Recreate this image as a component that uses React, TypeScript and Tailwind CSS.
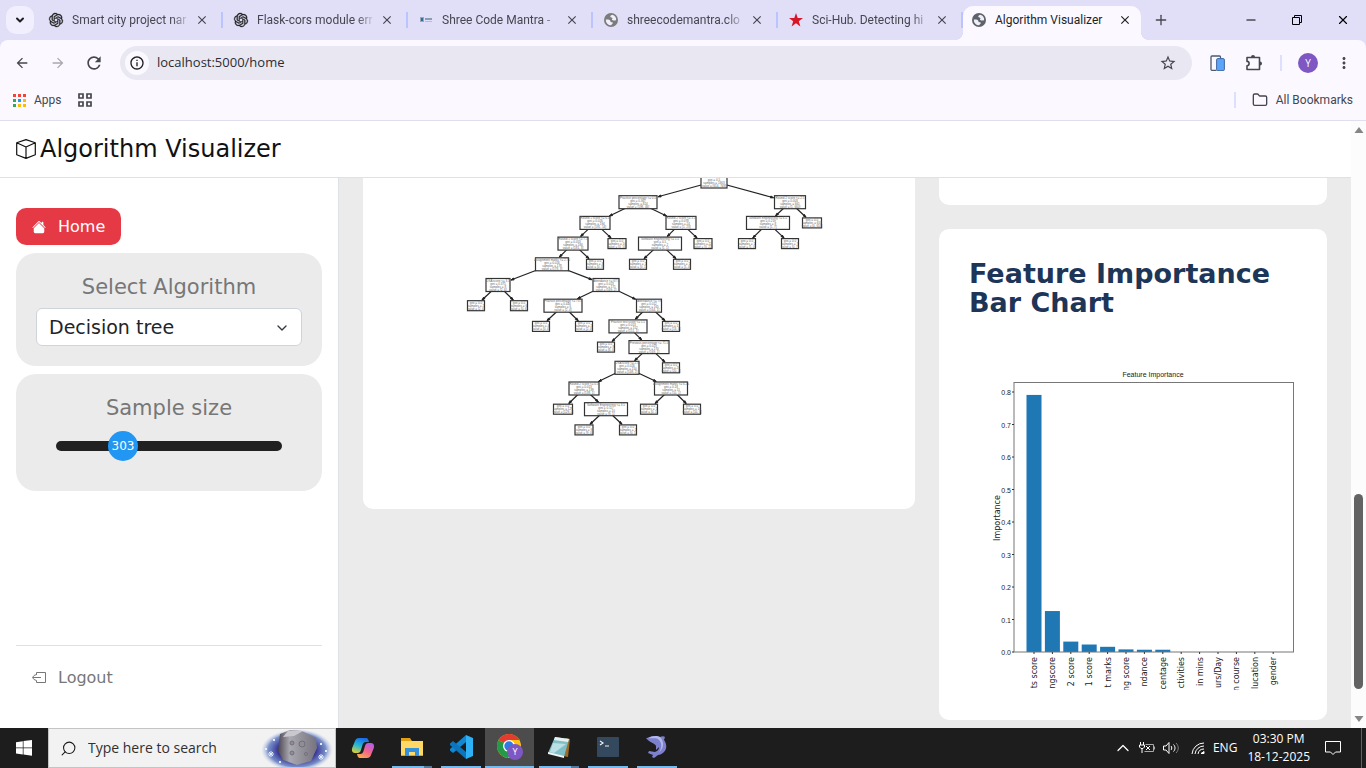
import { useState } from "react";
import type { ReactNode } from "react";
import clsx from "clsx";
import {
  MdArrowBack,
  MdArrowForward,
  MdClose,
  MdInfoOutline,
  MdMoreVert,
  MdRefresh,
  MdStarBorder,
} from "react-icons/md";
import { SiOpenai } from "react-icons/si";
import { BsHouseFill } from "react-icons/bs";
import { ChevronDown, ChevronUp, Folder, Minus, Plus, Search, X } from "lucide-react";

/* ---------- browser chrome ---------- */

const GlobeIcon = ({ className }: { className?: string }) => (
  <svg viewBox="0 0 14 14" className={clsx("size-3.5", className)}>
    <circle cx="7" cy="7" r="7" fill="currentColor" />
    <path
      d="M8.200 1.700C6.500 2.200 6 3.200 6.400 4c.4.700 1.600.3 2 1 .3.700-.8 1.300-.2 2 .7.800 2.300.3 3.900.2A5.200 5.200 0 0 0 8.200 1.700z"
      fill="#efeefb"
    />
    <path
      d="M1.800 6.600c1.600-.4 3.600-.2 4.200.7.500.8.100 1.300 1 1.700.9.400 1.700.2 1.800 1 .1 1-1.200 1.100-1.500 2.200A5.200 5.200 0 0 1 1.800 6.600z"
      fill="#efeefb"
    />
  </svg>
);

const CodeMantraIcon = () => (
  <svg viewBox="0 0 14 14" className="size-3.5">
    <path d="M1 4h4v5H1z" fill="#9aa7b4" />
    <path d="M2 5h2v3H2z" fill="#33699b" />
    <path d="M6 5h7v2H6z" fill="#8b9db0" />
    <path d="M6 8h7v1H6z" fill="#efb27c" />
  </svg>
);

const RedStar = () => (
  <svg viewBox="0 0 14 14" className="size-3.5">
    <path
      d="M7 0l1.700 5H14L9.800 8.200l1.600 5.300L7 10.300l-4.400 3.200 1.600-5.300L0 5h5.300z"
      fill="#d81427"
    />
  </svg>
);

const OpenAiIcon = () => (
  <SiOpenai className="size-3.5 overflow-visible stroke-[#1f1f1f] text-[#1f1f1f]" strokeWidth={0.6} />
);

const tabs: { title: string; icon: ReactNode }[] = [
  { title: "Smart city project nar", icon: <OpenAiIcon /> },
  { title: "Flask-cors module err", icon: <OpenAiIcon /> },
  { title: "Shree Code Mantra -", icon: <CodeMantraIcon /> },
  { title: "shreecodemantra.clo", icon: <GlobeIcon className="text-[#7b7b7b]" /> },
  { title: "Sci-Hub. Detecting hi", icon: <RedStar /> },
];

const TabStrip = () => (
  <div className="flex h-10 shrink-0 bg-[#e0dff7] pl-1.5 font-[Roboto,sans-serif]">
    <button
      aria-label="Search tabs"
      className="mt-1.5 flex size-7 shrink-0 items-center justify-center rounded-[10px] bg-[#f1effe] text-[#1f1f1f]"
    >
      <ChevronDown className="size-3" strokeWidth={4} />
    </button>
    <div className="ml-1 flex min-w-0">
      {tabs.map((tab) => (
        <div
          key={tab.title}
          className="flex w-[185px] min-w-0 items-center pl-[11px] text-xs text-[#45464f]"
        >
          <span className="flex w-3.5 shrink-0 justify-center">{tab.icon}</span>
          <span className="ml-[9px] min-w-0 flex-1 overflow-hidden whitespace-nowrap [mask-image:linear-gradient(to_right,black_100px,transparent_118px)]">
            {tab.title}
          </span>
          <button aria-label="Close tab" className="mr-3 ml-1.5">
            <MdClose className="size-3.5" />
          </button>
          <span className="h-4 w-0.5 bg-[#bcc4ff]" />
        </div>
      ))}
    </div>
    <div className="flex shrink-0 items-end">
      <span className="-ml-2 h-2 w-2 bg-[radial-gradient(circle_at_0_0,transparent_8px,#fbf9ff_8px)]" />
      <div className="flex h-[34px] w-[178px] items-center rounded-t-[10px] bg-[#fbf9ff] pb-1.5 pl-[9px] text-xs text-[#1f1f1f]">
        <GlobeIcon className="text-[#5f6368]" />
        <span className="ml-[9px] flex-1 whitespace-nowrap">Algorithm Visualizer</span>
        <button aria-label="Close tab" className="mr-[9px]">
          <MdClose className="size-3.5" />
        </button>
      </div>
      <span className="h-2 w-2 bg-[radial-gradient(circle_at_100%_0,transparent_8px,#fbf9ff_8px)]" />
    </div>
    <button aria-label="New tab" className="ml-1 text-[#45464f]">
      <Plus className="size-4" />
    </button>
    <div className="ml-auto flex shrink-0 text-black">
      <button aria-label="Minimize" className="flex w-[46px] items-center justify-center">
        <Minus className="size-3.5" strokeWidth={2} />
      </button>
      <button aria-label="Restore" className="flex w-[46px] items-center justify-center">
        <svg viewBox="0 0 10 10" className="size-2.5" fill="none" stroke="currentColor">
          <path d="M.5 2.500h7v7h-7zM2.500 2.500v-2h7v7h-2" />
        </svg>
      </button>
      <button aria-label="Close" className="flex w-[46px] items-center justify-center">
        <X className="size-3.5" strokeWidth={2} />
      </button>
    </div>
  </div>
);

const Toolbar = () => (
  <div className="bg-[#e0dff7]">
    <div className="flex h-[46px] items-center rounded-t-lg bg-[#fbf9ff] pl-3.5 text-[#45464f]">
      <button aria-label="Back">
        <MdArrowBack className="size-4" />
      </button>
      <button aria-label="Forward" className="ml-5 text-[#a9a8b0]">
        <MdArrowForward className="size-4" />
      </button>
      <button aria-label="Reload" className="ml-[18px]">
        <MdRefresh className="size-5" />
      </button>
      <div className="ml-4 flex h-[34px] min-w-0 flex-1 items-center rounded-full bg-[#e9e8f2] px-[5px]">
        <span className="flex size-6 items-center justify-center rounded-full bg-[#fbf9ff] text-[#1f1f1f]">
          <MdInfoOutline className="size-4" />
        </span>
        <input
          aria-label="Address"
          defaultValue="localhost:5000/home"
          className="ml-2 min-w-0 flex-1 bg-transparent text-[13px] text-[#2b2c34] outline-none"
        />
        <button aria-label="Bookmark this tab" className="mr-2.5">
          <MdStarBorder className="size-[18px]" />
        </button>
      </div>
      <button aria-label="Devices" className="ml-[18px]">
        <svg viewBox="0 0 16 16" className="size-4" fill="none">
          <path d="M2.500 15.300H2A1 1 0 0 1 1 14V2a1 1 0 0 1 1-1h7.500a1 1 0 0 1 1 1v1.500M2.500 15.300h4" stroke="#4b5a70" strokeWidth="1.300" />
          <rect x="6.600" y="3.600" width="7.800" height="12" rx="1.200" fill="#5ba4f8" stroke="#3d69a7" />
        </svg>
      </button>
      <button aria-label="Extensions" className="ml-5">
        <svg viewBox="0 0 16 16" className="size-4" fill="none" stroke="currentColor" strokeWidth="1.600">
          <path d="M1 2.500h12.500v12H1v-3.800c2.800 0 2.800-4.300 0-4.300z" strokeLinejoin="round" />
          <path d="M5 2a2 2 0 0 1 4 0zM14 6.500a2 2 0 0 1 0 4z" fill="currentColor" stroke="none" />
        </svg>
      </button>
      <span className="ml-[18px] h-4 w-0.5 bg-[#dde0fd]" />
      <button className="ml-4 flex size-5 items-center justify-center rounded-full bg-[#7e57c2] text-[10px] text-white">
        Y
      </button>
      <button aria-label="Menu" className="mr-[13px] ml-[17px]">
        <MdMoreVert className="size-[18px]" />
      </button>
    </div>
  </div>
);

const appDots = [
  "bg-[#f44336]", "bg-[#f44336]", "bg-[#f44336]",
  "bg-[#34a853]", "bg-[#2196f3]", "bg-[#fbbc04]",
  "bg-[#34a853]", "bg-[#fbbc04]", "bg-[#fbbc04]",
];

const BookmarksBar = () => (
  <div className="flex h-[34px] items-center bg-[#fbf9ff] px-[13px] pb-1.5 font-[Roboto,sans-serif] text-xs text-[#45464f]">
    <a href="#apps" className="flex items-center">
      <span className="grid grid-cols-3 gap-0.5">
        {appDots.map((color, i) => (
          <span key={i} className={clsx("size-[3px]", color)} />
        ))}
      </span>
      <span className="ml-2">Apps</span>
    </a>
    <button aria-label="Tab groups" className="ml-4">
      <svg viewBox="0 0 14 14" className="size-3.5" fill="none" stroke="currentColor" strokeWidth="1.700">
        <path d="M1 1h4v4H1zM9 1h4v4H9zM1 9h4v4H1zM9 9h4v4H9z" />
      </svg>
    </button>
    <span className="ml-auto h-4 w-0.5 bg-[#dde0fd]" />
    <a href="#bookmarks" className="ml-4 flex items-center">
      <Folder className="size-4" />
      <span className="ml-2">All Bookmarks</span>
    </a>
  </div>
);

/* ---------- sidebar ---------- */

const MIN_SAMPLES = 0;
const MAX_SAMPLES = 1143;

const Sidebar = () => {
  const [samples, setSamples] = useState(303);
  const ratio = (samples - MIN_SAMPLES) / (MAX_SAMPLES - MIN_SAMPLES);

  return (
    <aside className="flex w-[339px] shrink-0 flex-col border-r border-[#dee2e6] bg-white px-4 pt-[30px]">
      <a
        href="#home"
        className="flex h-[37px] items-center gap-3 self-start rounded-[10px] bg-[#e63946] px-4 text-white"
      >
        <BsHouseFill className="size-3.5" />
        Home
      </a>

      <div className="mt-2 rounded-[20px] bg-[#ebebeb] px-5 pt-5 pb-5">
        <label htmlFor="algorithm" className="block text-center text-[21px] leading-[29px] text-[#777777]">
          Select Algorithm
        </label>
        <div className="relative mt-1.5">
          <select
            id="algorithm"
            className="h-[38px] w-full appearance-none rounded-md border border-[#ced4da] bg-white px-3 text-[19px] text-[#212529]"
          >
            <option>Decision tree</option>
          </select>
          <ChevronDown className="pointer-events-none absolute top-3 right-3 size-4 text-[#343a40]" />
        </div>
      </div>

      <div className="mt-2 rounded-[20px] bg-[#ebebeb] px-10 pt-5 pb-[30px]">
        <label htmlFor="samples" className="block text-center text-[21px] leading-[29px] text-[#777777]">
          Sample size
        </label>
        <div className="relative mt-2 flex h-[30px] items-center">
          <input
            id="samples"
            type="range"
            min={MIN_SAMPLES}
            max={MAX_SAMPLES}
            value={samples}
            onChange={(e) => setSamples(Number(e.target.value))}
            className="h-2.5 w-full appearance-none rounded-full bg-[#212121] outline-none [&::-webkit-slider-thumb]:size-[30px] [&::-webkit-slider-thumb]:appearance-none [&::-webkit-slider-thumb]:rounded-full [&::-webkit-slider-thumb]:bg-[#2196f3]"
          />
          <output
            htmlFor="samples"
            className="pointer-events-none absolute w-[30px] text-center text-xs text-white"
            style={{ left: `calc(${ratio} * (100% - 30px))` }}
          >
            {samples}
          </output>
        </div>
      </div>

      <div className="mt-auto border-t border-[#dee2e6] pt-5 pb-[38px]">
        <a href="#logout" className="flex items-center gap-3 px-4 text-[#777777]">
          <svg viewBox="0 0 14 14" className="size-3.5" fill="none" stroke="currentColor">
            <path d="M4.500 4V1.500h9v10h-9V9.500M9 6.500H1M4.500 3.500L2 4.500.5 6.500 2 8.500l2.500 1" />
          </svg>
          Logout
        </a>
      </div>
    </aside>
  );
};

/* ---------- decision tree ---------- */

type TreeNode = {
  x: number;
  depth: number;
  w: number;
  parent: number;
  lines: string[];
};

const split = (
  x: number, depth: number, w: number, parent: number,
  rule: string, gini: string, samples: number, value: string,
): TreeNode => ({
  x, depth, w, parent,
  lines: [rule, `gini = ${gini}`, `samples = ${samples}`, `value = [${value}]`],
});

const leaf = (x: number, depth: number, w: number, parent: number, samples: number, value: string): TreeNode => ({
  x, depth, w, parent,
  lines: ["gini = 0.0", `samples = ${samples}`, `value = [${value}]`],
});

const tree: TreeNode[] = [
  split(351, 0, 26, -1, "ATS score <= 0.5", "0.5", 1363, "614, 749"),
  split(275, 1, 38, 0, "Practice percentage <= 0.5", "0.367", 814, "198, 46"),
  split(427, 1, 31, 0, "Round 2 score <= 2.5", "0.003", 661, "1, 660"),
  split(232, 2, 30, 1, "Round 1 score <= 6.5", "0.026", 194, "191, 14"),
  split(318, 2, 30, 1, "Round 2 score <= 3.5", "0.078", 24, "1, 23"),
  split(405, 2, 43, 2, "Software Engineering <= 6.5", "0.219", 8, "1, 7"),
  leaf(449, 2, 19, 2, 653, "0, 653"),
  split(210, 3, 30, 3, "Round 1 score <= 7.5", "0.053", 184, "181, 3"),
  leaf(254, 3, 18, 3, 10, "0, 10"),
  split(297, 3, 43, 4, "Software Engineering <= 5.5", "0.5", 2, "1, 1"),
  leaf(340, 3, 18, 4, 22, "0, 22"),
  leaf(384, 3, 17, 5, 1, "1, 0"),
  leaf(427, 3, 17, 5, 7, "0, 7"),
  split(189, 4, 33, 7, "Assignment marks <= 2.75", "0.026", 178, "178, 3"),
  leaf(232, 4, 17, 7, 3, "0, 3"),
  leaf(275, 4, 17, 9, 1, "0, 1"),
  leaf(319, 4, 17, 9, 1, "1, 0"),
  split(135, 5, 24, 13, "DSA score <= 3.5", "0.375", 8, "2, 6"),
  split(243, 5, 26, 13, "Attendance <= 67.5", "0.023", 171, "169, 2"),
  leaf(113, 6, 17, 17, 2, "2, 0"),
  leaf(156, 6, 17, 17, 6, "0, 6"),
  split(200, 6, 38, 18, "Practice percentage <= 73.5", "0.444", 6, "2, 4"),
  split(286, 6, 25, 18, "Attendance <= 79", "0.012", 165, "164, 1"),
  leaf(178, 7, 17, 21, 4, "0, 4"),
  leaf(221, 7, 17, 21, 2, "2, 0"),
  split(265, 7, 38, 22, "Practice test score <= 5.5", "0.013", 152, "151, 1"),
  leaf(308, 7, 17, 22, 13, "13, 0"),
  leaf(243, 8, 17, 25, 8, "8, 0"),
  split(286, 8, 40, 25, "Previous percentage <= 71.5", "0.023", 170, "169, 1"),
  split(264, 9, 24, 28, "DSA score <= 2.5", "0.026", 150, "148, 2"),
  leaf(308, 9, 17, 28, 20, "20, 0"),
  split(221, 10, 30, 29, "Round 2 score <= 0.5", "0.013", 139, "138, 1"),
  split(308, 10, 33, 29, "Assignment marks <= 6.25", "0.18", 11, "10, 1"),
  leaf(200, 11, 19, 31, 129, "129, 0"),
  split(243, 11, 43, 31, "Software Engineering <= 3.5", "0.117", 10, "9, 1"),
  leaf(286, 11, 17, 32, 1, "0, 1"),
  leaf(329, 11, 17, 32, 10, "10, 0"),
  leaf(221, 12, 18, 34, 9, "9, 0"),
  leaf(265, 12, 17, 34, 1, "0, 1"),
];

const centerY = (n: TreeNode) => 3.5 + n.depth * 20.7;
const boxHeight = (n: TreeNode) => (n.lines.length === 4 ? 13 : 10);

const Edge = ({ from, to }: { from: TreeNode; to: TreeNode }) => {
  const dx = from.x - to.x;
  const dy = centerY(from) - centerY(to);
  const length = Math.hypot(dx, dy);
  // distance from the child's centre to the border of its box
  const clip = Math.min(to.w / 2 / Math.abs(dx), boxHeight(to) / 2 / Math.abs(dy)) * length + 1;
  const ux = dx / length;
  const uy = dy / length;
  const tipX = to.x + ux * clip;
  const tipY = centerY(to) + uy * clip;
  const baseX = tipX + ux * 3;
  const baseY = tipY + uy * 3;

  return (
    <g stroke="#222222" fill="#222222">
      <line x1={from.x} y1={centerY(from)} x2={tipX} y2={tipY} strokeWidth="1.2" />
      <path d={`M${tipX} ${tipY}L${baseX - uy} ${baseY + ux}L${baseX + uy} ${baseY - ux}z`} />
    </g>
  );
};

const DecisionTree = () => (
  <svg viewBox="0 0 552 331" className="w-full" role="img" aria-label="Decision tree">
    {tree.map((node, i) => node.parent >= 0 && <Edge key={i} from={tree[node.parent]} to={node} />)}
    {tree.map((node, i) => {
      const h = boxHeight(node);
      const top = centerY(node) - h / 2;
      return (
        <g key={i}>
          <rect x={node.x - node.w / 2} y={top} width={node.w} height={h} fill="white" stroke="#333333" strokeWidth="1.2" />
          <text
            textAnchor="middle"
            fontSize="3"
            fill="#666666"
            className="font-['Liberation_Sans',sans-serif]"
          >
            {node.lines.map((line, j) => (
              <tspan key={j} x={node.x} y={top + 3 + j * 3}>
                {line}
              </tspan>
            ))}
          </text>
        </g>
      );
    })}
  </svg>
);

/* ---------- bar chart ---------- */

const features = [
  { label: "ts score", value: 0.791 },
  { label: "ngscore", value: 0.126 },
  { label: "2 score", value: 0.032 },
  { label: "1 score", value: 0.023 },
  { label: "t marks", value: 0.016 },
  { label: "ng score", value: 0.008 },
  { label: "ndance", value: 0.007 },
  { label: "centage", value: 0.007 },
  { label: "ctivities", value: 0 },
  { label: "in mins", value: 0 },
  { label: "urs/Day", value: 0 },
  { label: "n course", value: 0 },
  { label: "lucation", value: 0 },
  { label: "gender", value: 0 },
];

const ticks = ["0.0", "0.1", "0.2", "0.3", "0.4", "0.5", "0.6", "0.7", "0.8"];
const BASE_Y = 299;
const UNIT = 325;
const STEP = 18.4;

const ImportanceChart = () => (
  <svg viewBox="0 0 328 337" className="mt-9 w-full" role="img" aria-label="Feature importance">
    <g fill="#222222" fontSize="7" className="font-['Liberation_Sans',sans-serif]">
      <text x="184" y="24" textAnchor="middle">
        Feature Importance
      </text>
      {ticks.map((tick, i) => (
        <text key={tick} x="42" y={BASE_Y + 3 - i * 32.5} textAnchor="end">
          {tick}
        </text>
      ))}
    </g>
    <g fill="#1f77b4">
      {features.map((f, i) => (
        <rect
          key={f.label}
          x={57.5 + i * STEP}
          y={BASE_Y - f.value * UNIT}
          width="15"
          height={f.value * UNIT}
        />
      ))}
    </g>
    <rect x="45" y="29.500" width="279.500" height={BASE_Y - 29.5} fill="none" stroke="#777777" />
    <g stroke="#333333">
      {ticks.map((tick, i) => (
        <line key={tick} x1="43" x2="45" y1={BASE_Y - i * 32.5} y2={BASE_Y - i * 32.5} />
      ))}
      {features.map((f, i) => (
        <line key={f.label} x1={65 + i * STEP} x2={65 + i * STEP} y1={BASE_Y} y2={BASE_Y + 2} />
      ))}
    </g>
    <g fill="#222222" fontSize="8" className="font-['DejaVu_Sans',sans-serif]">
      <text textAnchor="middle" transform="translate(31 165) rotate(-90)">
        Importance
      </text>
      {features.map((f, i) => (
        <text key={f.label} textAnchor="end" transform={`translate(${68 + i * STEP} 304) rotate(-90)`}>
          {f.label}
        </text>
      ))}
    </g>
  </svg>
);

const Page = () => (
  <div className="flex min-h-0 flex-1 flex-col border-t border-[#dfdeec] bg-white font-['DejaVu_Sans',sans-serif]">
    <div className="flex min-h-0 flex-1">
      <div className="flex min-w-0 flex-1 flex-col">
        <header className="flex h-[57px] shrink-0 items-center gap-1 border-b border-[#dee2e6] px-4 text-[#111111]">
          <svg viewBox="0 0 20 20" className="size-5" fill="none" stroke="currentColor" strokeWidth="1.200" strokeLinejoin="round">
            <path d="M10 .6l9.300 3.200v12L10 19.400.7 15.800v-12zM.7 3.800L10 8l9.300-4.200M10 8v11.400" />
          </svg>
          <h1 className="text-2xl leading-none">Algorithm Visualizer</h1>
        </header>
        <div className="flex min-h-0 flex-1">
          <Sidebar />
          <main className="flex min-w-0 flex-1 items-start gap-6 overflow-hidden bg-[#ebebeb] px-6">
            <section className="min-w-0 flex-1 rounded-b-[10px] bg-white">
              <DecisionTree />
            </section>
            <div className="w-[388px] shrink-0">
              <div className="h-[27px] rounded-b-[10px] bg-white" />
              <section className="mt-6 rounded-[10px] bg-white p-[30px]">
                <h2 className="text-[27px] leading-[29px] font-bold text-[#1d3557]">
                  Feature Importance Bar Chart
                </h2>
                <ImportanceChart />
              </section>
            </div>
          </main>
        </div>
      </div>
      <div className="flex w-[15px] shrink-0 flex-col items-center justify-between bg-[#fcfcfc] py-1.5">
        <svg viewBox="0 0 10 6" className="h-1.5 w-2.5" fill="#858585">
          <path d="M5 0l4.500 6h-9z" />
        </svg>
        <div className="flex min-h-0 flex-1 flex-col justify-end pb-[27px]">
          <div className="h-[35%] w-[9px] rounded-full bg-[#636363]" />
        </div>
        <svg viewBox="0 0 10 6" className="h-1.5 w-2.5" fill="#858585">
          <path d="M5 6L.5 0h9z" />
        </svg>
      </div>
    </div>
  </div>
);

/* ---------- taskbar ---------- */

const AsteroidArt = () => (
  <svg viewBox="0 0 72 38" className="h-[38px] w-[72px]">
    <defs>
      <radialGradient id="sky">
        <stop offset="0.5" stopColor="#312a91" />
        <stop offset="0.8" stopColor="#5976bd" stopOpacity="0.8" />
        <stop offset="1" stopColor="#b8c6e8" stopOpacity="0" />
      </radialGradient>
      <linearGradient id="rock" x1="0" x2="1">
        <stop offset="0" stopColor="#4b4752" />
        <stop offset="0.3" stopColor="#aaa8b0" />
        <stop offset="1" stopColor="#76737f" />
      </linearGradient>
    </defs>
    <ellipse cx="36" cy="21" rx="36" ry="21" fill="url(#sky)" />
    <path d="M19 5l10-4 12 1 14 7 1 10-6 13-14 4-14-5-5-9z" fill="url(#rock)" />
    <path d="M27 2l15 0-9 5-11 1z" fill="#cac8cf" />
    <g fill="#908d98" stroke="#6b6874" strokeWidth="0.8">
      <circle cx="31" cy="14" r="2" />
      <circle cx="41" cy="15" r="3" />
      <circle cx="31" cy="24" r="2" />
      <circle cx="45" cy="25" r="1.500" />
    </g>
    <g stroke="#e5edff">
      <path d="M10 22v6M7 25h6M8 23l4 4M12 23l-4 4M60 25v6M57 28h6M58 26l4 4M62 26l-4 4" />
      <path d="M12 11h2M4 20h2M18 33h2M59 15h2M64 22h2" strokeWidth="2" />
    </g>
  </svg>
);

const CopilotIcon = () => (
  <svg viewBox="0 0 24 24" className="size-6">
    <defs>
      <linearGradient id="cpA" x1="0.600" y1="0" x2="0.200" y2="1">
        <stop offset="0" stopColor="#1c6bea" />
        <stop offset="0.500" stopColor="#22b8d4" />
        <stop offset="1" stopColor="#e4ce31" />
      </linearGradient>
      <linearGradient id="cpB" x1="0.800" y1="0" x2="0.200" y2="1">
        <stop offset="0" stopColor="#b45bf0" />
        <stop offset="0.500" stopColor="#f2648a" />
        <stop offset="1" stopColor="#ffab4d" />
      </linearGradient>
    </defs>
    <path d="M8 2h7c2 0 2.500 2 3 4h-3c-2 0-3 1-3.500 3L10 14c-.6 2-1.500 3-3.500 3H4c-3 0-3.500-3-2.800-5L4 5c.7-2 2-3 4-3z" fill="url(#cpA)" />
    <path d="M16 22H9c-2 0-2.500-2-3-4h3c2 0 3-1 3.500-3l1.500-5c.6-2 1.500-3 3.500-3H20c3 0 3.500 3 2.800 5L20 19c-.7 2-2 3-4 3z" fill="url(#cpB)" />
  </svg>
);

const ExplorerIcon = () => (
  <svg viewBox="0 0 24 24" className="size-6">
    <path d="M1 3h9l2 3h11v15H1z" fill="#e4a010" />
    <path d="M1 6h22v14H1z" fill="#ffd966" />
    <path d="M5 13h14v8h-4v-4H9v4H5z" fill="#3492dc" />
  </svg>
);

const VsCodeIcon = () => (
  <svg viewBox="0 0 24 24" className="size-6">
    <path d="M17 0l7 3v18l-7 3z" fill="#2fb1f5" />
    <path d="M17 0v7L4 18l-3-2.500V14z" fill="#1287d2" />
    <path d="M17 24v-7L4 6 1 8.500V10z" fill="#0a76bd" />
  </svg>
);

const ChromeIcon = () => (
  <svg viewBox="0 0 26 26" className="size-[26px]">
    <circle cx="12" cy="12" r="12" fill="#fbc116" />
    <path d="M12 12L1.600 6A12 12 0 0 1 22.400 6H12z" fill="#e33b2e" />
    <path d="M12 12L1.600 6A12 12 0 0 0 11 24l6-9z" fill="#229a48" />
    <circle cx="12" cy="12" r="6" fill="white" />
    <circle cx="12" cy="12" r="4.700" fill="#2c7be5" />
    <circle cx="18" cy="18" r="8" fill="#7e57c2" />
    <text x="18" y="21" fontSize="9" fill="white" textAnchor="middle">
      Y
    </text>
  </svg>
);

const NotepadIcon = () => (
  <svg viewBox="0 0 24 24" className="size-6">
    <path d="M19 3l4 1-2 18-5-1z" fill="#9b6c28" />
    <path d="M8 2l14 2-5 18L1 18z" fill="#80bfc7" />
    <path d="M8 2l14 2-1 3L7 5z" fill="#e8f1f1" />
    <path d="M6 8l13 1-12 9-4-1z" fill="#bbe0e4" />
    <path d="M1 17l16 4v2L1 19z" fill="#f2f5f5" />
  </svg>
);

const TerminalIcon = () => (
  <svg viewBox="0 0 24 24" className="size-6">
    <rect x="1" y="2" width="22" height="20" rx="1" fill="#34495e" />
    <path d="M4 6l3 2-3 2M9 11h4" fill="none" stroke="#edf0f3" strokeWidth="1.200" />
  </svg>
);

const DolphinIcon = () => (
  <svg viewBox="0 0 24 24" className="size-6">
    <path
      d="M1 3c3 0 5-2 8-2 2 0 4 0 6 1 2-1 4-1 5 0l-1 3c3 4 3 9 0 12-2 2-4 3-6 3l-4 3-2-1 1-2-5-2 1-2 6 1c3-1 4-3 4-5l-3 3v-4c-1-3-6-3-10-8z"
      fill="#7d80cd"
    />
    <path d="M3 3c5 1 8-1 11 2 3 3 3 8 0 12 5-3 5-10 2-14-3-3-9-2-13 0z" fill="#b3b8ea" />
  </svg>
);

const apps: { name: string; icon: ReactNode; state?: "open" | "stacked" | "active" }[] = [
  { name: "Copilot", icon: <CopilotIcon /> },
  { name: "File Explorer", icon: <ExplorerIcon />, state: "stacked" },
  { name: "Visual Studio Code", icon: <VsCodeIcon />, state: "open" },
  { name: "Chrome", icon: <ChromeIcon />, state: "active" },
  { name: "Notepad", icon: <NotepadIcon />, state: "stacked" },
  { name: "Terminal", icon: <TerminalIcon />, state: "open" },
  { name: "MySQL", icon: <DolphinIcon />, state: "open" },
];

const Taskbar = () => (
  <footer className="flex h-10 shrink-0 bg-[#1d1d1d] text-white">
    <button aria-label="Start" className="flex w-12 items-center justify-center">
      <svg viewBox="0 0 16 16" className="size-4" fill="currentColor">
        <path d="M0 2.200l6.800-1v6.300H0zM7.500 1.100L16 0v7.500H7.500zM0 8.200h6.800v6.300l-6.800-1zM7.500 8.200H16v7.600l-8.500-1.200z" />
      </svg>
    </button>
    <div className="flex w-[288px] items-center border border-[#c4c4c4] bg-[#f2f2f2] pr-0.5 pl-[11px]">
      <Search className="size-[17px] -scale-x-100 text-[#1b1b1b]" strokeWidth={1.5} />
      <input
        aria-label="Search"
        placeholder="Type here to search"
        className="ml-[11px] min-w-0 flex-1 bg-transparent text-sm outline-none placeholder:text-[#303030]"
      />
      <AsteroidArt />
    </div>
    <nav className="ml-0.5 flex">
      {apps.map((app) => (
        <button
          key={app.name}
          aria-label={app.name}
          className={clsx("flex w-[49px] flex-col items-center", app.state === "active" && "bg-[#4c4c4c]")}
        >
          <span className="flex flex-1 items-center">{app.icon}</span>
          {app.state && (
            <span className={clsx("flex h-0.5 bg-[#76b9ed]", app.state === "active" ? "w-full" : "w-10")}>
              {app.state === "stacked" && <span className="ml-auto w-2 bg-[#54799b]" />}
            </span>
          )}
        </button>
      ))}
    </nav>
    <div className="ml-auto flex items-center pr-1 text-xs">
      <ChevronUp className="size-5" strokeWidth={1.5} />
      <svg viewBox="0 0 16 12" className="ml-1.5 h-3 w-4" fill="none" stroke="currentColor">
        <path d="M1.500 0v3M4.500 0v3M.5 3h5v2l-1.500 1.500h-2L.5 5zM3 6.500V11" />
        <path d="M6.500 2.500h8v7h-9M15.500 4.500v3" stroke="#aaaaaa" />
        <path d="M7 4l4 4M11 4L7 8" />
      </svg>
      <svg viewBox="0 0 16 14" className="ml-2 h-3.5 w-4" fill="none" stroke="currentColor">
        <path d="M.5 5h2.500l3-3.500v11L3 9H.5zM8 5c1 1 1 3 0 4M10.500 3.500c2 2 2 5 0 7" />
        <path d="M13 2c3 3 3 7 0 10" stroke="#808080" />
      </svg>
      <svg viewBox="0 0 14 14" className="ml-3 size-3.5" fill="none" stroke="currentColor">
        <path d="M1 13A12 12 0 0 1 13 2M4 13a9 9 0 0 1 9-8M7 13a6 6 0 0 1 6-5" />
        <path d="M10 12.500h3v-2z" fill="currentColor" />
      </svg>
      <span className="ml-2">ENG</span>
      <div className="ml-2.5 text-center leading-[18px]">
        <p>03:30 PM</p>
        <p>18-12-2025</p>
      </div>
      <button aria-label="Notifications" className="ml-[15px]">
        <svg viewBox="0 0 16 16" className="size-4" fill="none" stroke="currentColor">
          <path d="M.5 1.500h15v10.500H10.500l-2.500 2.500-2.500-2.500H.5z" />
        </svg>
      </button>
      <span className="ml-5 h-10 w-px bg-[#606060]" />
    </div>
  </footer>
);

export default function App() {
  return (
    <div className="flex h-screen flex-col overflow-hidden bg-white font-['Open_Sans',sans-serif]">
      <TabStrip />
      <Toolbar />
      <BookmarksBar />
      <Page />
      <Taskbar />
    </div>
  );
}
